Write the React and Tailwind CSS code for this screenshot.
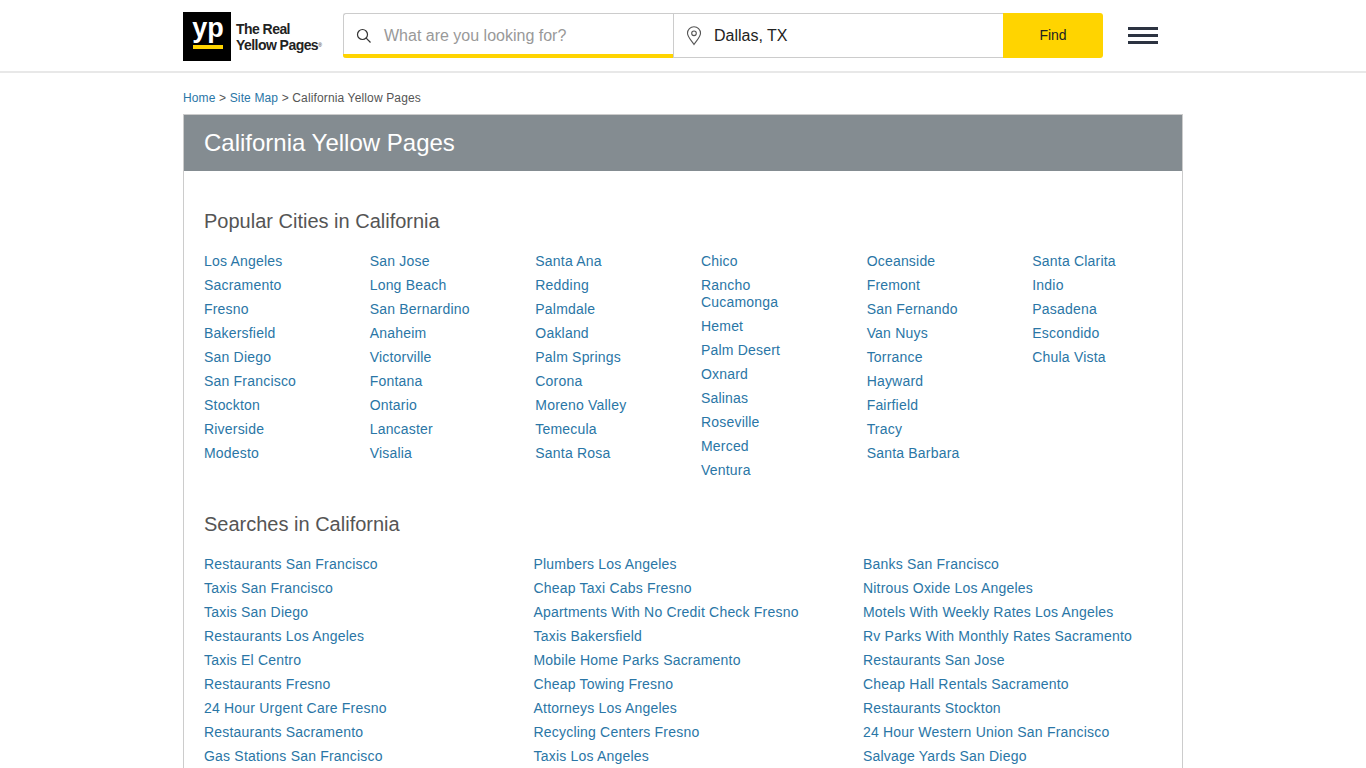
const cities = [
  ["Los Angeles","Sacramento","Fresno","Bakersfield","San Diego","San Francisco","Stockton","Riverside","Modesto"],
  ["San Jose","Long Beach","San Bernardino","Anaheim","Victorville","Fontana","Ontario","Lancaster","Visalia"],
  ["Santa Ana","Redding","Palmdale","Oakland","Palm Springs","Corona","Moreno Valley","Temecula","Santa Rosa"],
  ["Chico","Rancho Cucamonga","Hemet","Palm Desert","Oxnard","Salinas","Roseville","Merced","Ventura"],
  ["Oceanside","Fremont","San Fernando","Van Nuys","Torrance","Hayward","Fairfield","Tracy","Santa Barbara"],
  ["Santa Clarita","Indio","Pasadena","Escondido","Chula Vista"],
];
const searches = [
  ["Restaurants San Francisco","Taxis San Francisco","Taxis San Diego","Restaurants Los Angeles","Taxis El Centro","Restaurants Fresno","24 Hour Urgent Care Fresno","Restaurants Sacramento","Gas Stations San Francisco"],
  ["Plumbers Los Angeles","Cheap Taxi Cabs Fresno","Apartments With No Credit Check Fresno","Taxis Bakersfield","Mobile Home Parks Sacramento","Cheap Towing Fresno","Attorneys Los Angeles","Recycling Centers Fresno","Taxis Los Angeles"],
  ["Banks San Francisco","Nitrous Oxide Los Angeles","Motels With Weekly Rates Los Angeles","Rv Parks With Monthly Rates Sacramento","Restaurants San Jose","Cheap Hall Rentals Sacramento","Restaurants Stockton","24 Hour Western Union San Francisco","Salvage Yards San Diego"],
];

function Column({ items, width }) {
  return (
    <ul className={`${width} shrink-0 flex flex-col`}>
      {items.map((t) => (
        <li key={t} className="mb-[7px] pr-[40px] text-[14px] leading-[17px] tracking-[0.2px] text-[#2a76a6]">
          <a href="#">{t}</a>
        </li>
      ))}
    </ul>
  );
}

export default function App() {
  return (
    <div className="font-['Liberation_Sans',Arial,sans-serif] bg-white min-h-screen">
      <header className="h-[73px] border-b-2 border-[#e8e8e8] bg-white">
        <div className="w-[1000px] mx-auto flex items-start pt-[12px]">
          <div className="flex items-center w-[160px]">
            <div className="w-[48px] h-[49px] bg-black flex flex-col items-center shrink-0 pl-[2px]">
              <span className="text-white font-bold text-[27px] leading-[28px] mt-[2px]">yp</span>
              <span className="w-[30px] h-[4px] bg-[#ffd400] mt-[3px]"></span>
            </div>
            <div className="ml-[5px] text-[14px] leading-[16px] font-bold text-[#222] tracking-[-0.55px] whitespace-nowrap">
              <div>The Real</div>
              <div>Yellow Pages<sup className="text-[5px] font-normal">®</sup></div>
            </div>
          </div>
          <div className="flex h-[45px] mt-[1px] w-[760px]">
            <div className="w-[330px] border border-[#ccc] border-r-0 border-b-0 rounded-tl-[3px] rounded-bl-[3px] flex items-center relative bg-white">
              <svg width="16" height="16" viewBox="0 0 16 16" fill="none" stroke="#333" strokeWidth="1.2" className="ml-[12px]">
                <circle cx="6.5" cy="6.5" r="5" />
                <path d="M10.2 10.2 L14.5 14.5" />
              </svg>
              <span className="ml-[12px] text-[16px] text-[#999]">What are you looking for?</span>
              <div className="absolute left-[-1px] right-0 bottom-0 h-[4px] bg-[#ffd400] rounded-bl-[3px]"></div>
            </div>
            <div className="w-[330px] border border-[#ccc] border-r-0 flex items-center bg-white">
              <svg width="16" height="20" viewBox="0 0 16 20" fill="none" stroke="#555" strokeWidth="1.1" className="ml-[12px]">
                <path d="M8 18.5 C5.5 14.5 1.5 11 1.5 7.3 A6.5 6.5 0 0 1 14.5 7.3 C14.5 11 10.5 14.5 8 18.5 Z" />
                <circle cx="8" cy="7.3" r="2.3" />
              </svg>
              <span className="ml-[12px] text-[16px] text-[#222]">Dallas, TX</span>
            </div>
            <div className="w-[100px] bg-[#ffd400] rounded-r-[3px] flex items-center justify-center text-[14px] text-[#222]">Find</div>
          </div>
          <div className="ml-[25px] mt-[15px] w-[30px] flex flex-col gap-[4px]">
            <span className="h-[3px] bg-[#2c3341]"></span>
            <span className="h-[3px] bg-[#2c3341]"></span>
            <span className="h-[3px] bg-[#2c3341]"></span>
          </div>
        </div>
      </header>

      <main className="w-[1000px] mx-auto">
        <div className="pt-[18px] h-[41px] text-[12px] leading-[14px] tracking-[0.14px] text-[#555]">
          <a className="text-[#2a76a6]">Home</a> &gt; <a className="text-[#2a76a6]">Site Map</a> &gt; California Yellow Pages
        </div>
        <section className="border border-[#ccc]">
          <h1 className="h-[56px] bg-[#848c91] text-white text-[24px] leading-[56px] pl-[20px]">California Yellow Pages</h1>
          <div className="pl-[20px] pt-[37px] pb-[40px]">
            <h2 className="text-[20px] leading-[26px] text-[#555] mb-[19px]">Popular Cities in California</h2>
            <div className="flex">
              {cities.map((c, i) => <Column key={i} items={c} width="w-[165.67px]" />)}
            </div>
            <h2 className="text-[20px] leading-[26px] text-[#555] mt-[25px] mb-[19px]">Searches in California</h2>
            <div className="flex">
              {searches.map((c, i) => <Column key={i} items={c} width="w-[329.5px]" />)}
            </div>
          </div>
        </section>
      </main>
    </div>
  );
}
